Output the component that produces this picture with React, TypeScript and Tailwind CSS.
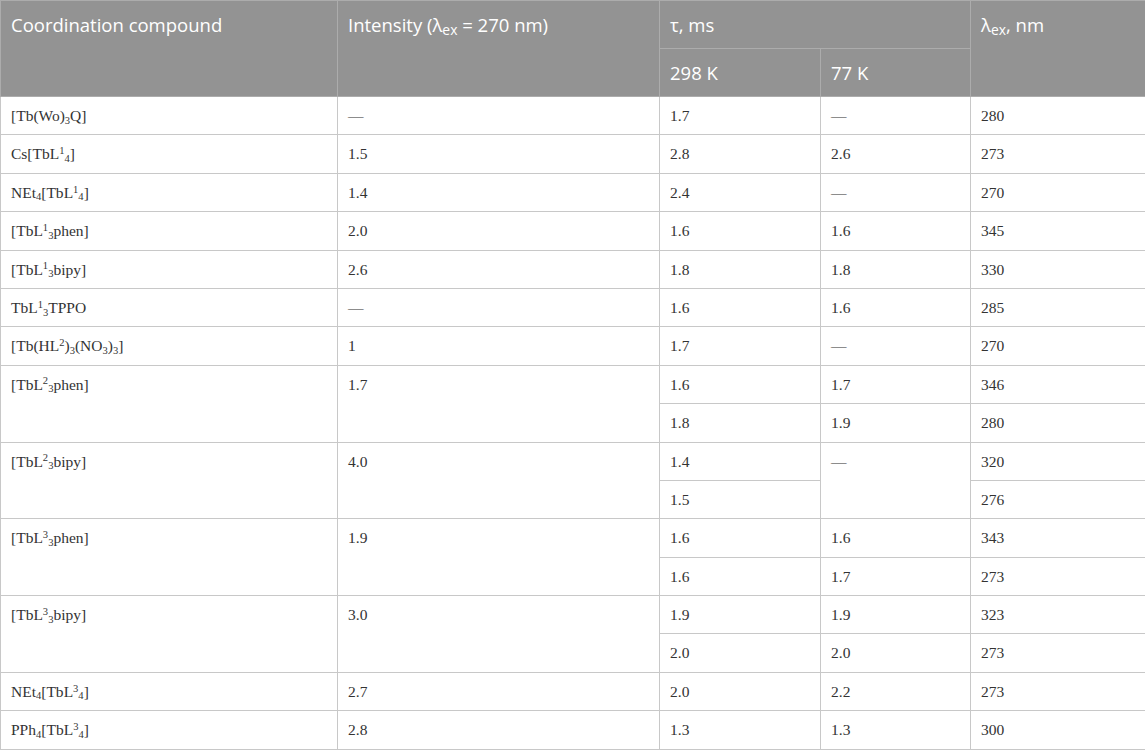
import React from "react";

type Cell = { v: React.ReactNode; rs?: number };
type Row = Cell[];

const L = (sup: string, sub: string) => (
  <>
    L<sup>{sup}</sup>
    <sub>{sub}</sub>
  </>
);

const rows: Row[] = [
  [{ v: <>[Tb(Wo)<sub>3</sub>Q]</> }, { v: "—" }, { v: "1.7" }, { v: "—" }, { v: "280" }],
  [{ v: <>Cs[Tb{L("1", "4")}]</> }, { v: "1.5" }, { v: "2.8" }, { v: "2.6" }, { v: "273" }],
  [{ v: <>NEt<sub>4</sub>[Tb{L("1", "4")}]</> }, { v: "1.4" }, { v: "2.4" }, { v: "—" }, { v: "270" }],
  [{ v: <>[Tb{L("1", "3")}phen]</> }, { v: "2.0" }, { v: "1.6" }, { v: "1.6" }, { v: "345" }],
  [{ v: <>[Tb{L("1", "3")}bipy]</> }, { v: "2.6" }, { v: "1.8" }, { v: "1.8" }, { v: "330" }],
  [{ v: <>Tb{L("1", "3")}TPPO</> }, { v: "—" }, { v: "1.6" }, { v: "1.6" }, { v: "285" }],
  [{ v: <>[Tb(HL<sup>2</sup>)<sub>3</sub>(NO<sub>3</sub>)<sub>3</sub>]</> }, { v: "1" }, { v: "1.7" }, { v: "—" }, { v: "270" }],
  [{ v: <>[Tb{L("2", "3")}phen]</>, rs: 2 }, { v: "1.7", rs: 2 }, { v: "1.6" }, { v: "1.7" }, { v: "346" }],
  [{ v: "1.8" }, { v: "1.9" }, { v: "280" }],
  [{ v: <>[Tb{L("2", "3")}bipy]</>, rs: 2 }, { v: "4.0", rs: 2 }, { v: "1.4" }, { v: "—", rs: 2 }, { v: "320" }],
  [{ v: "1.5" }, { v: "276" }],
  [{ v: <>[Tb{L("3", "3")}phen]</>, rs: 2 }, { v: "1.9", rs: 2 }, { v: "1.6" }, { v: "1.6" }, { v: "343" }],
  [{ v: "1.6" }, { v: "1.7" }, { v: "273" }],
  [{ v: <>[Tb{L("3", "3")}bipy]</>, rs: 2 }, { v: "3.0", rs: 2 }, { v: "1.9" }, { v: "1.9" }, { v: "323" }],
  [{ v: "2.0" }, { v: "2.0" }, { v: "273" }],
  [{ v: <>NEt<sub>4</sub>[Tb{L("3", "4")}]</> }, { v: "2.7" }, { v: "2.0" }, { v: "2.2" }, { v: "273" }],
  [{ v: <>PPh<sub>4</sub>[Tb{L("3", "4")}]</> }, { v: "2.8" }, { v: "1.3" }, { v: "1.3" }, { v: "300" }],
];

export default function App() {
  const th =
    "border border-[#acacac] bg-[#939393] px-[10px] pt-[11px] align-top text-left font-normal text-white";
  return (
    <div className="w-[1145px] bg-white">
      <table className="w-[1145px] table-fixed border-collapse border border-[#c4c4c4]">
        <colgroup>
          <col className="w-[337px]" />
          <col className="w-[322px]" />
          <col className="w-[161px]" />
          <col className="w-[150px]" />
          <col className="w-[175px]" />
        </colgroup>
        <thead className="font-['Open_Sans',sans-serif] text-[18.5px] leading-[26px]">
          <tr className="h-[48px]">
            <th rowSpan={2} className={th}>
              Coordination compound
            </th>
            <th rowSpan={2} className={th}>
              Intensity (λ<sub>ex</sub> = 270 nm)
            </th>
            <th colSpan={2} className={th}>
              τ, ms
            </th>
            <th rowSpan={2} className={th}>
              λ<sub>ex</sub>, nm
            </th>
          </tr>
          <tr className="h-[48px]">
            <th className={th}>298 K</th>
            <th className={th}>77 K</th>
          </tr>
        </thead>
        <tbody className="font-['Liberation_Serif',serif] text-[15.5px] leading-[20px] text-[#333333] [&_sub]:text-[0.68em] [&_sup]:text-[0.68em]">
          {rows.map((r, i) => (
            <tr key={i} className="h-[38.4px]">
              {r.map((c, j) => (
                <td
                  key={j}
                  rowSpan={c.rs}
                  className="border border-[#c8c8c8] px-[10px] pt-[9px] align-top"
                >
                  {c.v}
                </td>
              ))}
            </tr>
          ))}
        </tbody>
      </table>
    </div>
  );
}
